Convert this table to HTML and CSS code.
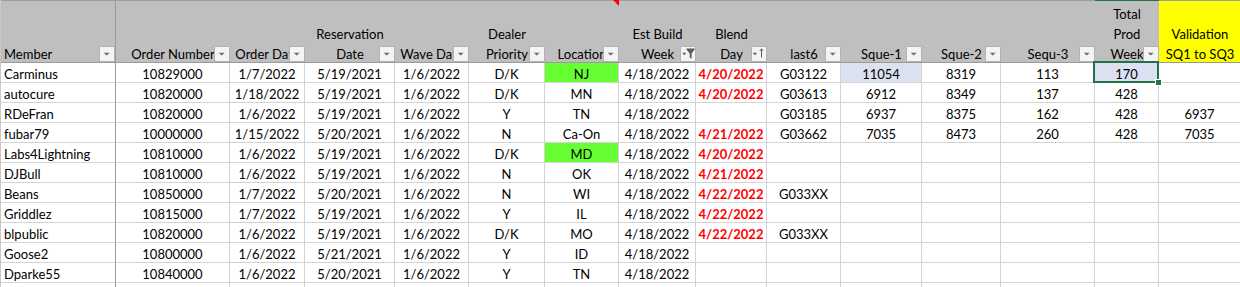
FILE: index.html
```html
<!DOCTYPE html>
<html>
<head>
<meta charset="utf-8">
<link rel="stylesheet" href="styles.css">
</head>
<body>
<div class="sheet">
  <div class="row hrow">
    <div class="hc hl frz"><div class="lbl">Member</div><span class="fb"><svg width="14" height="14" viewBox="0 0 14 14"><path d="M3.7 5.7H9.7L6.7 8.4Z" fill="#6b6b6b"/></svg></span></div>
    <div class="hc"><div class="lbl">Order Number</div><span class="fb"><svg width="14" height="14" viewBox="0 0 14 14"><path d="M3.7 5.7H9.7L6.7 8.4Z" fill="#6b6b6b"/></svg></span></div>
    <div class="hc"><div class="lbl">Order Date</div><span class="fb"><svg width="14" height="14" viewBox="0 0 14 14"><path d="M3.7 5.7H9.7L6.7 8.4Z" fill="#6b6b6b"/></svg></span></div>
    <div class="hc"><div class="lbl">Reservation<br>Date</div><span class="fb"><svg width="14" height="14" viewBox="0 0 14 14"><path d="M3.7 5.7H9.7L6.7 8.4Z" fill="#6b6b6b"/></svg></span></div>
    <div class="hc"><div class="lbl">Wave Date</div><span class="fb"><svg width="14" height="14" viewBox="0 0 14 14"><path d="M3.7 5.7H9.7L6.7 8.4Z" fill="#6b6b6b"/></svg></span></div>
    <div class="hc"><div class="lbl">Dealer<br>Priority</div><span class="fb"><svg width="14" height="14" viewBox="0 0 14 14"><path d="M3.7 5.7H9.7L6.7 8.4Z" fill="#6b6b6b"/></svg></span></div>
    <div class="hc cmt"><div class="lbl">Location</div><span class="fb"><svg width="14" height="14" viewBox="0 0 14 14"><path d="M3.7 5.7H9.7L6.7 8.4Z" fill="#6b6b6b"/></svg></span></div>
    <div class="hc"><div class="lbl">Est Build<br>Week</div><span class="fb"><svg width="14" height="14" viewBox="0 0 14 14"><path d="M1.3 5.7H5.2L3.25 8.2Z" fill="#5a5a5a"/><path d="M5.5 1.6H13.6V2.6L10.6 6.4V11.8L8.7 10.6V6.4L5.5 2.6Z" fill="#5a5a5a"/></svg></span></div>
    <div class="hc"><div class="lbl">Blend<br>Day</div><span class="fb"><svg width="14" height="14" viewBox="0 0 14 14"><path d="M0.8 5.7H5L2.9 8.2Z" fill="#5a5a5a"/><path d="M9.5 2.2V10.5M8 3.8L9.5 1.8L11 3.8" stroke="#5a5a5a" stroke-width="1" fill="none"/></svg></span></div>
    <div class="hc"><div class="lbl">last6</div><span class="fb"><svg width="14" height="14" viewBox="0 0 14 14"><path d="M3.7 5.7H9.7L6.7 8.4Z" fill="#6b6b6b"/></svg></span></div>
    <div class="hc"><div class="lbl">Sque-1</div><span class="fb"><svg width="14" height="14" viewBox="0 0 14 14"><path d="M3.7 5.7H9.7L6.7 8.4Z" fill="#6b6b6b"/></svg></span></div>
    <div class="hc"><div class="lbl">Sque-2</div><span class="fb"><svg width="14" height="14" viewBox="0 0 14 14"><path d="M3.7 5.7H9.7L6.7 8.4Z" fill="#6b6b6b"/></svg></span></div>
    <div class="hc"><div class="lbl">Sequ-3</div><span class="fb"><svg width="14" height="14" viewBox="0 0 14 14"><path d="M3.7 5.7H9.7L6.7 8.4Z" fill="#6b6b6b"/></svg></span></div>
    <div class="hc actcol"><div class="lbl">Total<br>Prod<br>Week</div><span class="fb"><svg width="14" height="14" viewBox="0 0 14 14"><path d="M3.7 5.7H9.7L6.7 8.4Z" fill="#6b6b6b"/></svg></span></div>
    <div class="hc yel"><div class="lbl">Validation<br>SQ1 to SQ3</div></div>
  </div>

  <div class="row">
    <div class="c l frz">Carminus</div><div class="c">10829000</div><div class="c">1/7/2022</div><div class="c">5/19/2021</div><div class="c">1/6/2022</div><div class="c">D/K</div><div class="c g">NJ</div><div class="c">4/18/2022</div><div class="c r">4/20/2022</div><div class="c">G03122</div><div class="c sel">11054</div><div class="c">8319</div><div class="c">113</div><div class="c sel act">170</div><div class="c"></div>
  </div>
  <div class="row">
    <div class="c l frz">autocure</div><div class="c">10820000</div><div class="c">1/18/2022</div><div class="c">5/19/2021</div><div class="c">1/6/2022</div><div class="c">D/K</div><div class="c">MN</div><div class="c">4/18/2022</div><div class="c r">4/20/2022</div><div class="c">G03613</div><div class="c">6912</div><div class="c">8349</div><div class="c">137</div><div class="c">428</div><div class="c"></div>
  </div>
  <div class="row">
    <div class="c l frz">RDeFran</div><div class="c">10820000</div><div class="c">1/6/2022</div><div class="c">5/19/2021</div><div class="c">1/6/2022</div><div class="c">Y</div><div class="c">TN</div><div class="c">4/18/2022</div><div class="c r"></div><div class="c">G03185</div><div class="c">6937</div><div class="c">8375</div><div class="c">162</div><div class="c">428</div><div class="c">6937</div>
  </div>
  <div class="row">
    <div class="c l frz">fubar79</div><div class="c">10000000</div><div class="c">1/15/2022</div><div class="c">5/20/2021</div><div class="c">1/6/2022</div><div class="c">N</div><div class="c">Ca-On</div><div class="c">4/18/2022</div><div class="c r">4/21/2022</div><div class="c">G03662</div><div class="c">7035</div><div class="c">8473</div><div class="c">260</div><div class="c">428</div><div class="c">7035</div>
  </div>
  <div class="row">
    <div class="c l frz">Labs4Lightning</div><div class="c">10810000</div><div class="c">1/6/2022</div><div class="c">5/19/2021</div><div class="c">1/6/2022</div><div class="c">D/K</div><div class="c g">MD</div><div class="c">4/18/2022</div><div class="c r">4/20/2022</div><div class="c"></div><div class="c"></div><div class="c"></div><div class="c"></div><div class="c"></div><div class="c"></div>
  </div>
  <div class="row">
    <div class="c l frz">DJBull</div><div class="c">10810000</div><div class="c">1/6/2022</div><div class="c">5/19/2021</div><div class="c">1/6/2022</div><div class="c">N</div><div class="c">OK</div><div class="c">4/18/2022</div><div class="c r">4/21/2022</div><div class="c"></div><div class="c"></div><div class="c"></div><div class="c"></div><div class="c"></div><div class="c"></div>
  </div>
  <div class="row">
    <div class="c l frz">Beans</div><div class="c">10850000</div><div class="c">1/7/2022</div><div class="c">5/20/2021</div><div class="c">1/6/2022</div><div class="c">N</div><div class="c">WI</div><div class="c">4/18/2022</div><div class="c r">4/22/2022</div><div class="c">G033XX</div><div class="c"></div><div class="c"></div><div class="c"></div><div class="c"></div><div class="c"></div>
  </div>
  <div class="row">
    <div class="c l frz">Griddlez</div><div class="c">10815000</div><div class="c">1/7/2022</div><div class="c">5/19/2021</div><div class="c">1/6/2022</div><div class="c">Y</div><div class="c">IL</div><div class="c">4/18/2022</div><div class="c r">4/22/2022</div><div class="c"></div><div class="c"></div><div class="c"></div><div class="c"></div><div class="c"></div><div class="c"></div>
  </div>
  <div class="row">
    <div class="c l frz">blpublic</div><div class="c">10820000</div><div class="c">1/6/2022</div><div class="c">5/19/2021</div><div class="c">1/6/2022</div><div class="c">D/K</div><div class="c">MO</div><div class="c">4/18/2022</div><div class="c r">4/22/2022</div><div class="c">G033XX</div><div class="c"></div><div class="c"></div><div class="c"></div><div class="c"></div><div class="c"></div>
  </div>
  <div class="row">
    <div class="c l frz">Goose2</div><div class="c">10800000</div><div class="c">1/6/2022</div><div class="c">5/21/2021</div><div class="c">1/6/2022</div><div class="c">Y</div><div class="c">ID</div><div class="c">4/18/2022</div><div class="c"></div><div class="c"></div><div class="c"></div><div class="c"></div><div class="c"></div><div class="c"></div><div class="c"></div>
  </div>
  <div class="row">
    <div class="c l frz">Dparke55</div><div class="c">10840000</div><div class="c">1/6/2022</div><div class="c">5/20/2021</div><div class="c">1/6/2022</div><div class="c">Y</div><div class="c">TN</div><div class="c">4/18/2022</div><div class="c"></div><div class="c"></div><div class="c"></div><div class="c"></div><div class="c"></div><div class="c"></div><div class="c"></div>
  </div>
  <div class="row">
    <div class="c l frz"></div><div class="c"></div><div class="c"></div><div class="c"></div><div class="c"></div><div class="c"></div><div class="c"></div><div class="c"></div><div class="c"></div><div class="c"></div><div class="c"></div><div class="c"></div><div class="c"></div><div class="c"></div><div class="c"></div>
  </div>
</div>
</body>
</html>
```
FILE: styles.css
```css
* { box-sizing: border-box; margin: 0; padding: 0; }
html, body { background: #fff; }
body {
  margin: 0;
  overflow: hidden;
  font-family: "Lato", "Liberation Sans", sans-serif;
  font-size: 13px;
  color: #000;
}
.sheet {
  width: 1241px;
  height: 287px;
  overflow: hidden;
  border-left: 1px solid #c8c8c8;
}
.row {
  display: grid;
  grid-template-columns: 115px 114px 75px 90px 74px 76px 74px 77px 71px 74px 81px 79px 94px 64px 82px;
}
/* header */
.hc {
  position: relative;
  height: 63px;
  background: #bfbfbf;
  border-top: 1px solid #9e9e9e;
  border-bottom: 1px solid #9a9a9a;
  display: flex;
  flex-direction: column;
  justify-content: flex-end;
  text-align: center;
}
.hc .lbl {
  overflow: hidden;
  white-space: nowrap;
  line-height: 20px;
  margin-bottom: -2px;
}
.hc.hl { text-align: left; padding-left: 3px; }
.hc.frz { border-right: 1px solid #9a9a9a; }
.hc.yel { background: #ffff00; }
.hc.actcol { border-top-color: #217346; }
.fb {
  position: absolute;
  right: 0;
  bottom: 0;
  width: 16px;
  height: 16px;
  background: #f4f4f4;
  border: 1px solid #b3b3b3;
  display: flex;
}
.fb svg { display: block; }
.cmt::after {
  content: "";
  position: absolute;
  top: -1px;
  right: 0;
  border-left: 6px solid transparent;
  border-top: 6px solid #ff0000;
}
/* body cells */
.c {
  position: relative;
  height: 20px;
  border-right: 1px solid #d4d4d4;
  border-bottom: 1px solid #d4d4d4;
  display: flex;
  align-items: flex-end;
  justify-content: center;
  line-height: 16px;
  white-space: nowrap;
  overflow: hidden;
}
.c.l { justify-content: flex-start; padding-left: 3px; }
.c.frz { border-right-color: #9a9a9a; }
.c.g { background: #66ff33; }
.c.r { color: #ff0000; font-weight: 700; }
.c.sel { background: #dce1f1; }
.c.act { overflow: visible; z-index: 2; }
.c.act::after {
  content: "";
  position: absolute;
  left: -2px;
  top: -2px;
  right: -1px;
  bottom: -1px;
  border: 2px solid #217346;
}
.c.act::before {
  content: "";
  position: absolute;
  right: -3px;
  bottom: -3px;
  width: 5px;
  height: 5px;
  background: #217346;
  outline: 1px solid #fff;
  z-index: 3;
}
```
